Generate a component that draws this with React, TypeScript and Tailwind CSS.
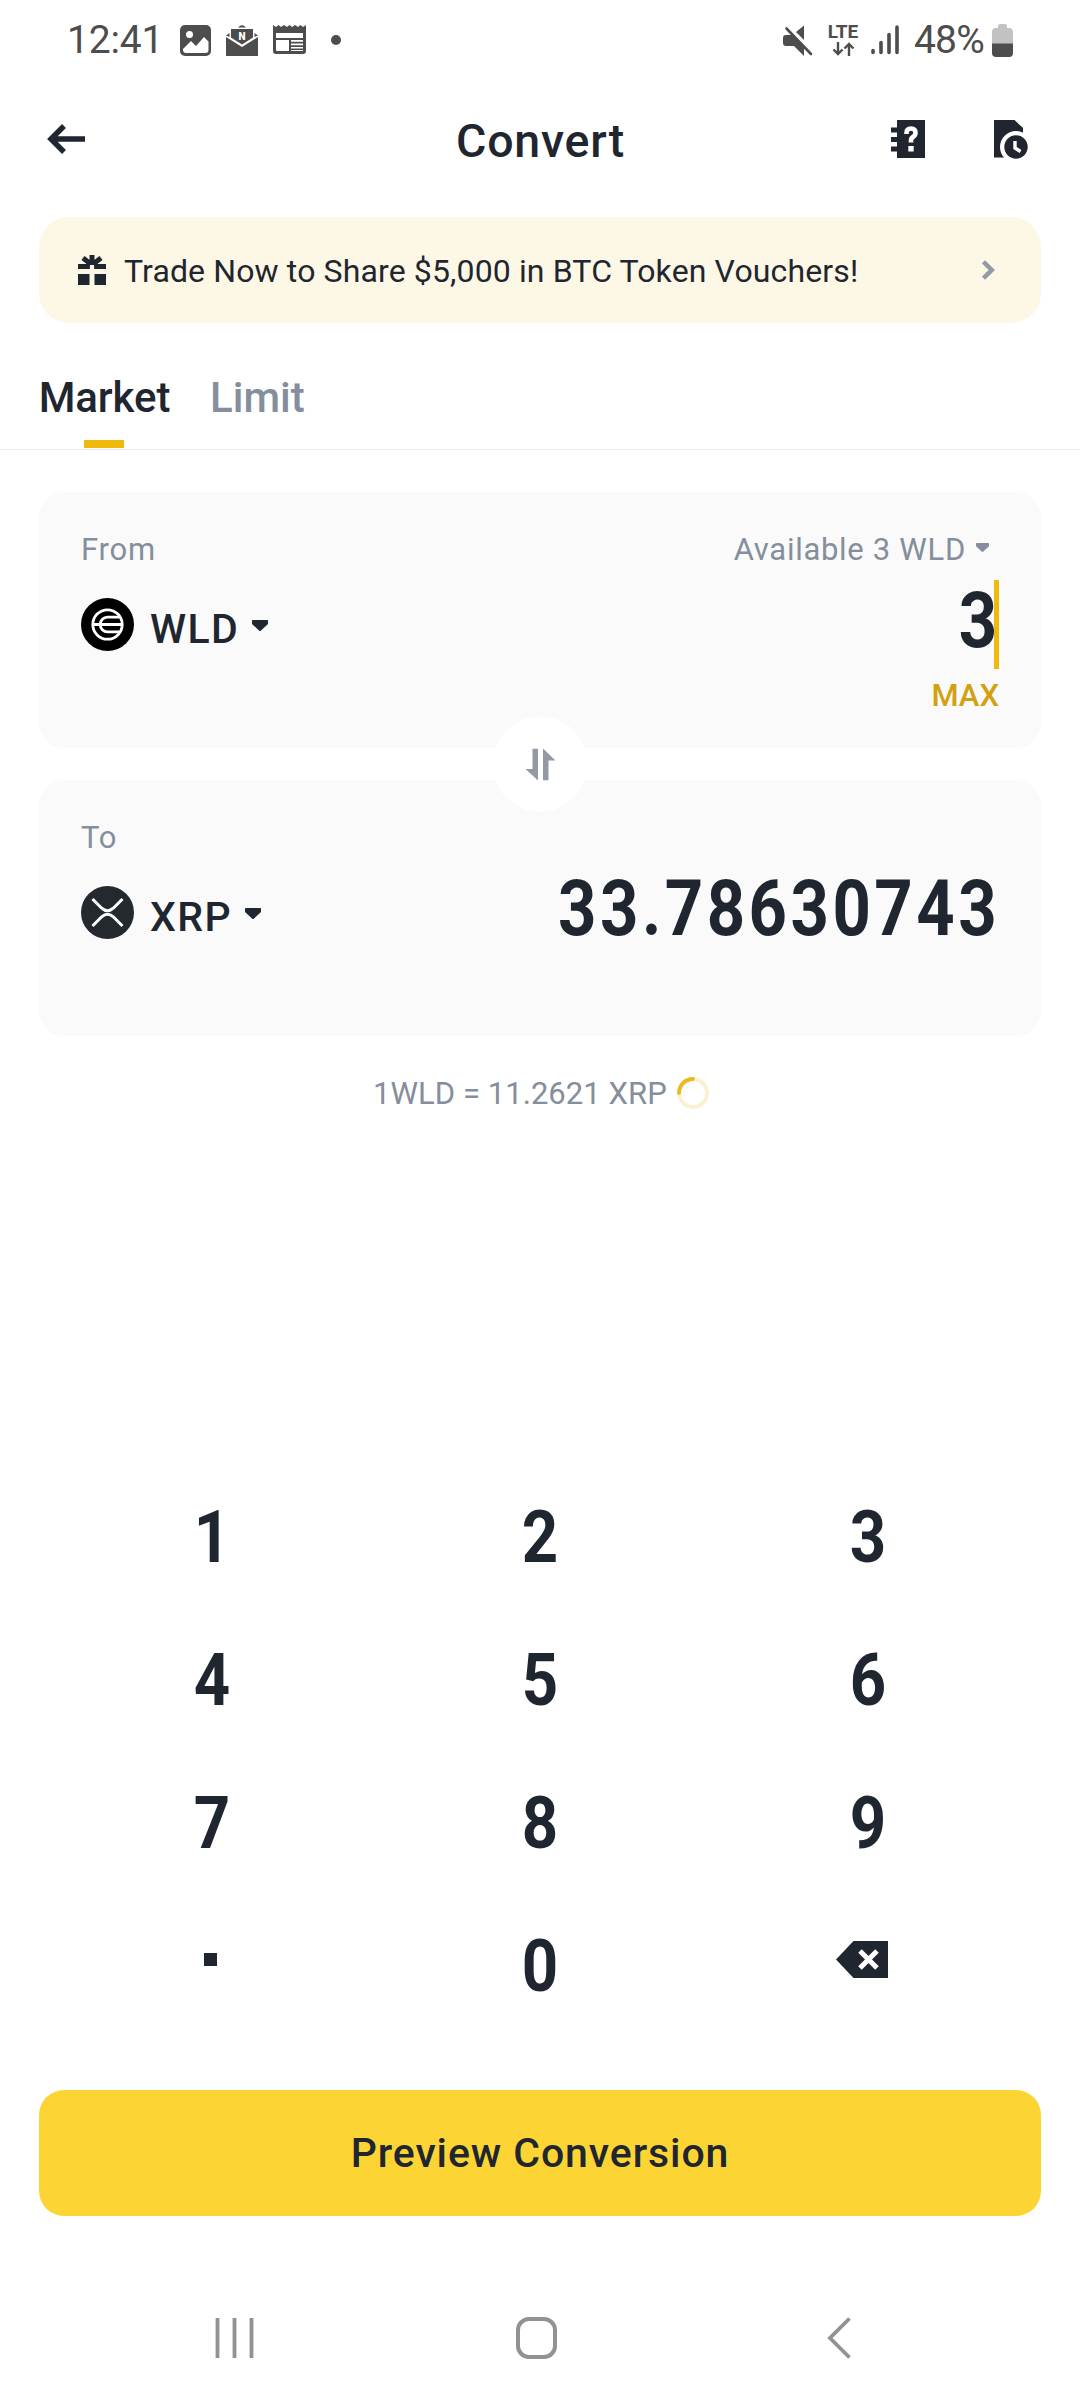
import type { ReactNode } from "react";

const keys = ["1", "2", "3", "4", "5", "6", "7", "8", "9"];

function Caret({ className }: { className: string }) {
  return (
    <svg className={className} viewBox="0 0 16 11" fill="currentColor">
      <path d="M1 0h14q1 0 1 1v3L9 10.5q-1 1-2 0L0 4V1q0-1 1-1z" />
    </svg>
  );
}

function StatusBar() {
  return (
    <div className="flex h-20 items-center justify-between pl-[67px] pr-[67px] text-[39px] leading-none text-[#4d4d4d]">
      <div className="flex items-center">
        <span className="w-[113px] whitespace-nowrap tracking-[-0.2px]">12:41</span>
        {/* Gallery */}
        <svg className="h-[31px] w-[31px]" viewBox="0 0 31 31">
          <rect width="31" height="31" rx="5" fill="currentColor" />
          <circle cx="9.5" cy="9.5" r="3.5" fill="#fff" />
          <path d="M3 24l8-8 5 5 8-9 4.500 4.500V25a3 3 0 0 1-3 3H6a3 3 0 0 1-3-3z" fill="#fff" />
        </svg>
        {/* News mail */}
        <svg className="ml-[15px] h-[31px] w-[32px]" viewBox="0 0 32 31" fill="currentColor">
          <path d="M12 2.500Q16-2 20 2.500zM5 4h22v8.500l-11 7L5 12.500z" />
          <path d="M3.500 8v4L0 10.500zM28.500 8v4l3.500-1.500z" />
          <path d="M0 12l16 10 16-10v19H0z" />
          <text x="16" y="15" textAnchor="middle" fontSize="10" fontWeight="900" fill="#fff">
            N
          </text>
        </svg>
        {/* Newspaper */}
        <svg className="ml-[15px] h-[30px] w-[33px]" viewBox="0 0 33 30">
          <path
            d="M0 0l3 2 2.500-2L8 2l3-2 3 2 2.500-2L19 2l3-2 3 2 2.500-2L30 2l3-2v26q0 3-3 3H3q-3 0-3-3z"
            fill="currentColor"
          />
          <path d="M3 8h27v5H3zM3 15h13v11H4q-1 0-1-1zM18 15h12v1.800H18zM18 18.500h12v1.700H18zM18 22h12v1.600H18zM18 25h12v1H18z" fill="#fff" />
        </svg>
        <span className="ml-[25px] h-2.5 w-2.5 rounded-full bg-[#4d4d4d]" />
      </div>
      <div className="flex items-center">
        {/* Muted speaker */}
        <svg className="h-[31px] w-[30px]" viewBox="0 0 30 31" fill="currentColor">
          <path d="M3 10h7l11 11v10L11 21H3q-3 0-3-3v-5q0-3 3-3z" />
          <path d="M13 7l8-6.500V15z" />
          <path d="M3.500 3.500L28 29" stroke="currentColor" strokeWidth="2.600" strokeLinecap="round" />
        </svg>
        <div className="ml-[14px] mr-px flex h-8 w-8 flex-col items-center justify-between">
          <span className="text-[19px] font-bold leading-[15px]">LTE</span>
          <svg className="h-[14px] w-[23px]" viewBox="0 0 23 14" fill="none" stroke="currentColor" strokeWidth="2.400">
            <path d="M6 0v12M1.500 7.500L6 12l4.500-4.500M17 14V2M12.500 6.500L17 2l4.500 4.500" />
          </svg>
        </div>
        <svg
          className="ml-[11px] h-[30px] w-[28px]"
          viewBox="0 0 28 30"
          fill="none"
          stroke="currentColor"
          strokeWidth="3.600"
          strokeLinecap="round"
        >
          <path d="M2 25.500V27.500M10 17.500v10M18 9.500v18M26 2v25.500" />
        </svg>
        <span className="ml-[15px] w-[78px] whitespace-nowrap tracking-[-0.8px]">48%</span>
        {/* Battery */}
        <svg className="h-[33px] w-[21px]" viewBox="0 0 21 33">
          <path d="M8 0h5q2 0 2 2v2h2q4 0 4 4v12H0V8q0-4 4-4h2V2q0-2 2-2z" fill="#c2c2c2" />
          <path d="M0 19.500h21V29q0 4-4 4H4q-4 0-4-4z" fill="#4d4d4d" />
        </svg>
      </div>
    </div>
  );
}

function Header() {
  return (
    <header className="grid h-[120px] grid-cols-3 items-center pl-[47px] pr-[52px]">
      <svg className="mb-0.5 h-[30px] w-[38px]" viewBox="0 0 38 30" fill="none" stroke="currentColor" strokeWidth="5.500">
        <path d="M38 15H4.500M17 2L4 15l13 13" />
      </svg>
      <h1 className="pl-[6px] pt-[3px] text-center text-[46.500px] font-medium leading-none tracking-[0.8px]">Convert</h1>
      <div className="mb-0.5 flex items-center justify-end gap-[69px]">
        {/* Help book */}
        <svg className="h-[38px] w-[34px]" viewBox="0 0 34 38">
          <path d="M6 0h28v38H6v-6.500H0v-5h6v-4.500H0v-5h6v-4.500H0v-5h6z" fill="currentColor" />
          <path d="M15.500 14v-1q0-4.500 4.500-4.500t4.500 4.300q0 2.700-2.500 4.200-2 1.300-2 3.500v2" fill="none" stroke="#fff" strokeWidth="4.600" />
          <path d="M17.300 26h5.400v5.500h-5.400z" fill="#fff" />
        </svg>
        {/* Order history */}
        <svg className="h-[39px] w-[34px]" viewBox="0 0 34 39">
          <path d="M0 0h20.500L29 8v29.500H0z" fill="currentColor" />
          <circle cx="22" cy="27" r="16" fill="#fff" />
          <circle cx="22" cy="27" r="11.700" fill="currentColor" />
          <path d="M21 21v7l5.500 3.500" fill="none" stroke="#fff" strokeWidth="3.400" />
        </svg>
      </div>
    </header>
  );
}

function Banner() {
  return (
    <div className="mx-[39px] mt-[17px] flex h-[106px] items-center rounded-[30px] bg-[#fdf7e5] pl-[39px] pr-[46px]">
      <svg className="h-[30px] w-[28px]" viewBox="0 0 28 30" fill="currentColor">
        <path d="M0 9h28v5H0zM0 19h11.500v11H0zM16.500 19H28v11H16.500z" />
        <path d="M14 10V0M14 10L5 3M14 10l9-7" fill="none" stroke="currentColor" strokeWidth="5" />
        <path d="M11.800 14l.2-4h4l.2 4z" fill="#fdf7e5" />
      </svg>
      <span className="ml-[18px] mt-0.5 flex-1 whitespace-nowrap text-[32px] leading-none tracking-[0.130px]">
        Trade Now to Share $5,000 in BTC Token Vouchers!
      </span>
      <svg className="h-5 w-[13px] text-[#929aa5]" viewBox="0 0 13 20" fill="none" stroke="currentColor" strokeWidth="4.500">
        <path d="M1.500 1.800L9.800 10l-8.300 8.200" />
      </svg>
    </div>
  );
}

function Tabs() {
  return (
    <div className="flex h-[127px] gap-[42px] border-b border-[#eaecef] pl-[39px] text-[42px] font-medium leading-none">
      <div className="flex w-[129px] flex-col items-center whitespace-nowrap">
        <span className="ml-0.5 mt-[54px] tracking-[-0.1px]">Market</span>
        <span className="mt-[21px] h-2 w-10 bg-[#f0b90b]" />
      </div>
      <span className="mt-[54px] text-[#848e9c]">Limit</span>
    </div>
  );
}

function WldLogo() {
  return (
    <svg className="h-[53px] w-[53px]" viewBox="0 0 53 53" fill="none" stroke="#fff" strokeWidth="2.800">
      <circle cx="26.500" cy="26.500" r="26.500" fill="#000" stroke="none" />
      <circle cx="26.500" cy="26.500" r="14.700" />
      <path d="M12 26.500h29M39 19.200H26.500a7.300 7.300 0 0 0 0 14.600H39" />
    </svg>
  );
}

function XrpLogo() {
  return (
    <svg className="h-[53px] w-[53px]" viewBox="0 0 53 53" fill="none" stroke="#fff" strokeWidth="3">
      <circle cx="26.500" cy="26.500" r="26.500" fill="#23292f" stroke="none" />
      <path d="M11.500 13l9.200 9.200q5.800 5.200 11.600 0L41.500 13M11.500 40l9.200-9.200q5.800-5.200 11.600 0L41.500 40" />
    </svg>
  );
}

function CoinCard({
  label,
  symbol,
  logo,
  children,
}: {
  label: string;
  symbol: string;
  logo: ReactNode;
  children: ReactNode;
}) {
  return (
    <section className="flex h-64 justify-between rounded-[25px] bg-[#fafafa] pl-[42px] pr-[42px] pt-[37px]">
      <div>
        <p className="h-10 text-[31px] leading-[41px] tracking-[0.8px] text-[#848e9c]">{label}</p>
        <div className="mt-[29px] flex h-[53px] items-center">
          {logo}
          <span className="ml-4 mt-[9px] text-[41px] font-medium leading-none tracking-[1.400px]">{symbol}</span>
          <Caret className="ml-[13px] mt-0.5 h-[11px] w-4" />
        </div>
      </div>
      <div className="flex flex-col items-end">{children}</div>
    </section>
  );
}

function ConvertForm() {
  return (
    <main className="relative mx-[39px] mt-[42px] flex flex-col gap-8">
      <CoinCard label="From" symbol="WLD" logo={<WldLogo />}>
        <div className="flex h-10 items-center pr-[10px] text-[31px] leading-10 tracking-[0.7px] text-[#848e9c]">
          <span className="pt-px">Available 3 WLD</span>
          <Caret className="mb-1 ml-[10px] h-[9px] w-[13px]" />
        </div>
        <div className="mt-[11px] flex h-[89px]">
          <span className="origin-right scale-x-[0.87] text-[77px] font-bold leading-[82px]">3</span>
          <span className="relative -ml-[3px] w-[5px] bg-[#f0b90b]" />
        </div>
        <span className="mt-1.5 text-[31px] font-medium leading-[41px] text-[#d2a011]">MAX</span>
      </CoinCard>
      <CoinCard label="To" symbol="XRP" logo={<XrpLogo />}>
        <span className="-mr-px mt-[51px] origin-right scale-x-[0.87] text-[77px] font-bold leading-[82px] tracking-[4px]">
          33.78630743
        </span>
      </CoinCard>
      <button
        aria-label="Swap"
        className="absolute left-1/2 top-1/2 flex h-[95px] w-[95px] -translate-x-1/2 -translate-y-1/2 items-center justify-center rounded-full bg-white text-[#929aa5]"
      >
        <svg className="h-8 w-[30px]" viewBox="0 0 30 32" fill="currentColor">
          <path d="M7 0h5.500v32L0 20.500h7zM17.500 0L30 12h-7v20h-5.500z" />
        </svg>
      </button>
    </main>
  );
}

function Keypad() {
  return (
    <div className="mt-[353px] grid auto-rows-[143px] grid-cols-3 px-12 text-[73px] font-bold leading-none">
      {keys.map((key) => (
        <button key={key} className="flex items-center justify-center">
          <span className="scale-x-[0.87]">{key}</span>
        </button>
      ))}
      <button aria-label="." className="flex items-center justify-center">
        <span className="mb-3.5 mr-[3px] h-[13px] w-[13px] bg-[#1f2630]" />
      </button>
      <button className="flex items-center justify-center">
        <span className="scale-x-[0.87]">0</span>
      </button>
      <button aria-label="Delete" className="flex items-center justify-center">
        <svg className="mb-3.5 mr-3 h-[37px] w-[52px]" viewBox="0 0 52 37">
          <path d="M17.500 0H52v37H17.500L0 18.500z" fill="currentColor" />
          <path d="M24 10l17 17M41 10L24 27" stroke="#fff" strokeWidth="5" />
        </svg>
      </button>
    </div>
  );
}

export default function App() {
  return (
    <div className="flex h-[2400px] w-[1080px] flex-col bg-white font-[Roboto,sans-serif] text-[#1f2630]">
      <StatusBar />
      <Header />
      <Banner />
      <Tabs />
      <ConvertForm />

      {/* Rate with refresh countdown */}
      <div className="mt-[37px] flex h-10 items-center pl-[373px]">
        <span className="w-[304px] whitespace-nowrap pt-0.5 text-[31px] leading-10 tracking-[0.050px] text-[#848e9c]">
          1WLD = 11.2621 XRP
        </span>
        <svg className="h-8 w-8" viewBox="0 0 32 32" fill="none" strokeWidth="3.800">
          <circle cx="16" cy="16" r="14" stroke="#fbf0cf" />
          <path d="M2 16A14 14 0 0 1 16 2" stroke="#ecb81e" strokeLinecap="round" />
        </svg>
      </div>

      <Keypad />

      <button className="mx-[39px] mt-[52px] h-[126px] shrink-0 rounded-[25px] bg-[#fcd535] text-[41px] font-medium leading-none tracking-[0.9px]">
        Preview Conversion
      </button>

      {/* System navigation */}
      <nav className="mt-[101px] flex h-[42px] text-[#929292]">
        <svg className="ml-[215px] h-[42px] w-[39px]" viewBox="0 0 39 42" stroke="currentColor" strokeWidth="3.800">
          <path d="M2.500 1v40M19.500 1v40M36.500 1v40" />
        </svg>
        <span className="ml-[262px] h-[42px] w-[41px] rounded-[13px] border-4 border-[#929292]" />
        <svg className="ml-[270px] h-[42px] w-6" viewBox="0 0 24 42" fill="none" stroke="currentColor" strokeWidth="3.800">
          <path d="M22.500 1.500L3 21l19.500 19.500" />
        </svg>
      </nav>
    </div>
  );
}
